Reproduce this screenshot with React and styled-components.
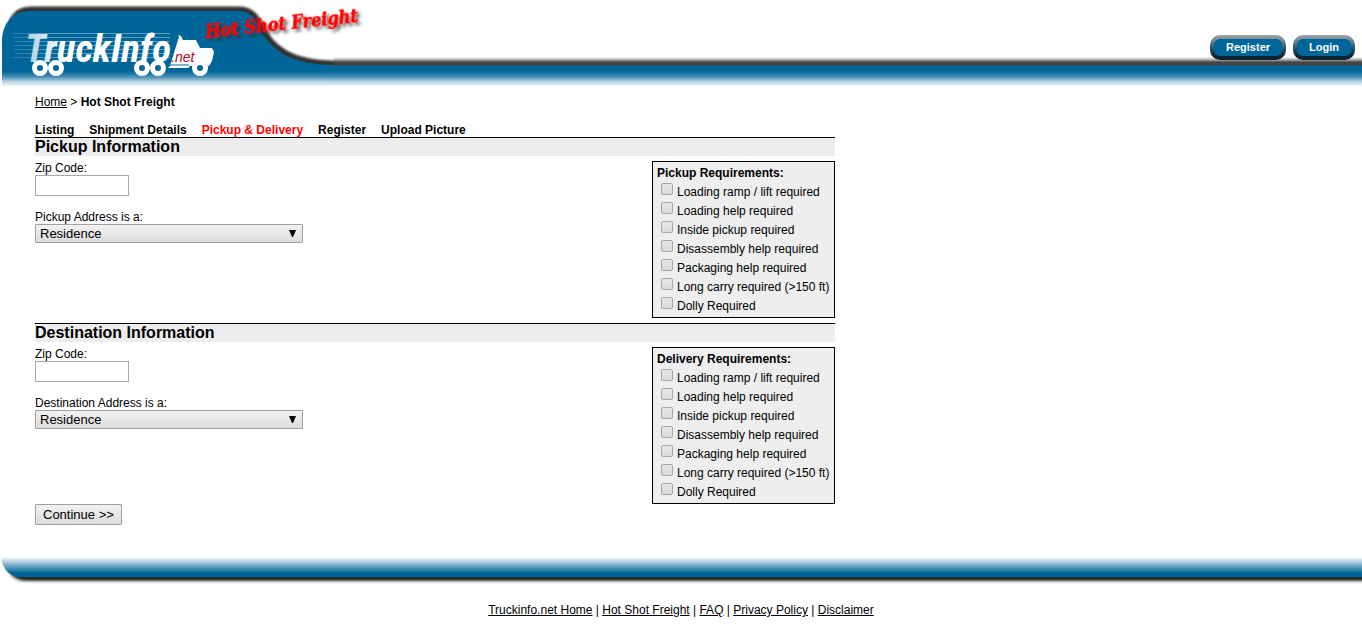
import React from "react";
import styled, { createGlobalStyle } from "styled-components";

const Global = createGlobalStyle`
  body {
    margin: 0;
    background: #fff;
    color: #000;
    font: 12px/14px "Liberation Sans", Arial, sans-serif;
  }
  *, *::before, *::after { box-sizing: border-box; }
`;

const Page = styled.div`
  display: flex;
  flex-direction: column;
`;

const Header = styled.header`
  display: flex;
  justify-content: space-between;
  height: 88px;
  background: linear-gradient(
    to bottom,
    #fff 57px,
    #c4c4c4 59px,
    #777 61px,
    #444 62px,
    #444 65px,
    #069 66px,
    #069 71px,
    #4a91b6 77px,
    #bdd7e4 82px,
    #fff 87px
  );
`;

const Brand = styled.a`
  display: block;
  height: 88px;
`;

const Account = styled.nav`
  display: flex;
  gap: 7px;
  padding: 35px 7px 0 0;
`;

const PillButton = styled.button`
  height: 25px;
  padding: 0 12px;
  border: 4px solid transparent;
  border-radius: 10px;
  background:
    linear-gradient(#069, #069) padding-box,
    linear-gradient(to bottom, #a2a6a7, #6c8a97 20%, #24506a 55%, #0b2430 85%) border-box;
  color: #fff;
  font: bold 11px/15px "Liberation Sans", Arial, sans-serif;
`;

const Main = styled.main`
  display: flex;
  flex-direction: column;
  align-items: flex-start;
  width: 100%;
  max-width: 870px;
  padding: 7px 35px 32px;
`;

const Crumbs = styled.nav`
  margin-bottom: 14px;
`;

const TextLink = styled.a`
  color: #000;
  text-decoration: underline;
`;

const Steps = styled.nav`
  display: flex;
  flex-wrap: wrap;
  gap: 0 15px;
`;

const Step = styled.a`
  color: ${(p) => (p.$active ? "#f00" : "#000")};
  font-weight: bold;
  text-decoration: none;
`;

const Section = styled.section`
  width: 100%;
  border-top: 1px solid #000;
`;

const SectionTitle = styled.h2`
  margin: 0 0 5px;
  background: #ededed;
  font-size: 16px;
  line-height: 18px;
`;

const SectionBody = styled.div`
  display: flex;
  justify-content: space-between;
  align-items: flex-start;
  padding-bottom: ${(p) => (p.$last ? 0 : 5)}px;
`;

const Fields = styled.div`
  display: flex;
  flex-direction: column;
  gap: 14px;
`;

const Field = styled.div`
  display: flex;
  flex-direction: column;
  align-items: flex-start;
`;

const ZipInput = styled.input`
  width: 94px;
  height: 21px;
  padding: 0 4px;
  border: 1px solid #a9a9a9;
  font: 13px "Liberation Sans", Arial, sans-serif;
`;

const SelectBox = styled.div`
  display: grid;
  align-items: center;
  width: 268px;
  > * { grid-area: 1 / 1; }
`;

const Select = styled.select`
  appearance: none;
  width: 100%;
  height: 19px;
  padding: 0 24px 0 4px;
  border: 1px solid #a0a0a0;
  border-radius: 1px;
  background: linear-gradient(#f2f2f2, #dcdcdc);
  color: #000;
  font: 13px/16px "Liberation Sans", Arial, sans-serif;
`;

const Arrow = styled.svg`
  justify-self: end;
  margin-right: 7px;
  pointer-events: none;
`;

const Requirements = styled.fieldset`
  display: flex;
  flex-direction: column;
  min-width: 183px;
  margin: 0;
  padding: 4px;
  border: 1px solid #000;
  background: #eee;
`;

const RequirementsTitle = styled.legend`
  float: left;
  padding: 0;
  font-weight: bold;
  line-height: 14px;
`;

const Requirement = styled.label`
  display: flex;
  gap: 4px;
  height: 19px;
  padding: 3px 0 0 4px;
  line-height: 18px;
  white-space: nowrap;
`;

const Checkbox = styled.input`
  appearance: none;
  flex: none;
  width: 12px;
  height: 12px;
  margin: 0;
  border: 1px solid #a6a6a6;
  border-radius: 2px;
  background: linear-gradient(#e6e6e6, #dadada);
  &:checked { background: #555; }
`;

const ContinueButton = styled.button`
  height: 21px;
  padding: 0 7px;
  border: 1px solid #a0a0a0;
  border-radius: 1px;
  background: linear-gradient(#f2f2f2, #dcdcdc);
  color: #000;
  font: 13px/18px "Liberation Sans", Arial, sans-serif;
`;

const FooterBand = styled.svg`
  display: block;
  width: 100%;
  height: 32px;
`;

const FooterLinks = styled.footer`
  padding: 14px 8px;
  text-align: center;
`;

const WHEELS = [40, 56, 142, 158, 200];
const STREAKS = [
  [11, 33], [13, 37], [15, 41], [12, 45], [14, 49], [16, 53], [11, 57],
];

function Logo() {
  return (
    <svg width="420" height="88" viewBox="0 0 420 88" role="img" aria-label="TruckInfo.net Hot Shot Freight">
      <defs>
        <filter id="edgeBlur" x="-10%" y="-20%" width="120%" height="140%">
          <feGaussianBlur stdDeviation="1.2" />
        </filter>
        <filter id="textShadow" x="-10%" y="-40%" width="120%" height="200%">
          <feDropShadow dx="3" dy="3" stdDeviation="1.5" floodColor="#222" floodOpacity="0.65" />
        </filter>
        <clipPath id="tab">
          <rect width="334" height="88" />
        </clipPath>
        <linearGradient id="body" x1="0" x2="0" y1="0" y2="88" gradientUnits="userSpaceOnUse">
          <stop offset="0.81" stopColor="#069" />
          <stop offset="0.875" stopColor="#4a91b6" />
          <stop offset="0.93" stopColor="#bdd7e4" />
          <stop offset="0.99" stopColor="#fff" />
        </linearGradient>
        <linearGradient id="letters" x1="24" x2="64" y1="0" y2="0" gradientUnits="userSpaceOnUse">
          <stop offset="0" stopColor="#a9cbdd" />
          <stop offset="1" stopColor="#fff" />
        </linearGradient>
        <linearGradient id="streak" x1="10" x2="50" y1="0" y2="0" gradientUnits="userSpaceOnUse">
          <stop offset="0" stopColor="#8fbbd2" stopOpacity="0.2" />
          <stop offset="1" stopColor="#9cc3d8" stopOpacity="0.6" />
        </linearGradient>
      </defs>
      <g clipPath="url(#tab)">
        <rect width="334" height="88" fill="#fff" />
        <path
          d="M12 22 C17 13 22 10 32 10 H239 C251 10 256 17 261 28 C271 47 289 64 334 64 H400"
          fill="none"
          stroke="#333"
          strokeWidth="7"
          filter="url(#edgeBlur)"
        />
        <path
          d="M2 42 C2 24 12 11 30 11 H238 C250 11 255 18 260 29 C270 48 288 65 334 65 V88 H2 Z"
          fill="url(#body)"
        />
      </g>
      <g fill="url(#streak)">
        {STREAKS.map(([x, y]) => (
          <rect key={y} x={x} y={y} width={170 - x} height="1" />
        ))}
      </g>
      <path
        d="M170 66 L178 40 L179 37 L178 35 L181 36 L183 40 H196 L200 48 H212 L214 52 L212 61 L209 66 H190 L188 68 H168 Z"
        fill="#fff"
      />
      <text
        x="25"
        y="62"
        fill="url(#letters)"
        fontFamily="'Roboto Condensed', Lato, 'Liberation Sans', sans-serif"
        fontSize="39"
        fontWeight="bold"
        fontStyle="italic"
      >
        TruckInfo
      </text>
      <text
        x="171"
        y="62"
        fill="#b00a18"
        fontFamily="'Liberation Sans', Arial, sans-serif"
        fontSize="14"
        fontStyle="italic"
      >
        .net
      </text>
      <path d="M170 65 H189" stroke="#069" />
      {WHEELS.map((x) => (
        <circle key={x} cx={x} cy="68" r="5.5" fill="#069" stroke="#fff" strokeWidth="5" />
      ))}
      <text
        x="206"
        y="38"
        transform="rotate(-6 206 38)"
        fill="#f00"
        stroke="#f00"
        strokeWidth="0.5"
        fontFamily="'DejaVu Serif Condensed', 'DejaVu Serif', serif"
        fontSize="18"
        fontWeight="bold"
        fontStyle="italic"
        filter="url(#textShadow)"
      >
        Hot Shot Freight
      </text>
    </svg>
  );
}

const EXTRAS = [
  "Loading ramp / lift required",
  "Loading help required",
  "Inside pickup required",
  "Disassembly help required",
  "Packaging help required",
  "Long carry required (>150 ft)",
  "Dolly Required",
];

function AddressSection({ id, title, addressLabel, requirementsTitle, last }) {
  return (
    <Section>
      <SectionTitle>{title}</SectionTitle>
      <SectionBody $last={last}>
        <Fields>
          <Field>
            <label htmlFor={`${id}-zip`}>Zip Code:</label>
            <ZipInput id={`${id}-zip`} type="text" />
          </Field>
          <Field>
            <label htmlFor={`${id}-kind`}>{addressLabel}</label>
            <SelectBox>
              <Select id={`${id}-kind`} defaultValue="Residence">
                <option>Residence</option>
              </Select>
              <Arrow width="7" height="7" viewBox="0 0 7 7" aria-hidden="true">
                <path d="M0 0H7L4 7H3Z" />
              </Arrow>
            </SelectBox>
          </Field>
        </Fields>
        <Requirements>
          <RequirementsTitle>{requirementsTitle}</RequirementsTitle>
          {EXTRAS.map((text) => (
            <Requirement key={text}>
              <Checkbox type="checkbox" />
              {text}
            </Requirement>
          ))}
        </Requirements>
      </SectionBody>
    </Section>
  );
}

const STEPS = ["Listing", "Shipment Details", "Pickup & Delivery", "Register", "Upload Picture"];
const LINKS = ["Truckinfo.net Home", "Hot Shot Freight", "FAQ", "Privacy Policy", "Disclaimer"];

export default function App() {
  return (
    <Page>
      <Global />
      <Header>
        <Brand href="#">
          <Logo />
        </Brand>
        <Account>
          <PillButton type="button">Register</PillButton>
          <PillButton type="button">Login</PillButton>
        </Account>
      </Header>
      <Main>
        <Crumbs>
          <TextLink href="#">Home</TextLink> &gt; <b>Hot Shot Freight</b>
        </Crumbs>
        <Steps>
          {STEPS.map((step) => (
            <Step key={step} href="#" $active={step === "Pickup & Delivery"}>
              {step}
            </Step>
          ))}
        </Steps>
        <AddressSection
          id="pickup"
          title="Pickup Information"
          addressLabel="Pickup Address is a:"
          requirementsTitle="Pickup Requirements:"
        />
        <AddressSection
          id="delivery"
          title="Destination Information"
          addressLabel="Destination Address is a:"
          requirementsTitle="Delivery Requirements:"
          last
        />
        <ContinueButton type="button">Continue &gt;&gt;</ContinueButton>
      </Main>
      <FooterBand aria-hidden="true">
        <defs>
          <linearGradient id="band" x1="0" x2="0" y1="0" y2="1">
            <stop offset="0" stopColor="#fff" />
            <stop offset="0.3" stopColor="#9cc3d6" />
            <stop offset="0.7" stopColor="#1f77a4" />
            <stop offset="0.8" stopColor="#069" />
            <stop offset="1" stopColor="#069" />
          </linearGradient>
          <filter id="bandBlur" x="-5%" y="-20%" width="110%" height="160%">
            <feGaussianBlur stdDeviation="1.5" />
          </filter>
        </defs>
        <path d="M8 12 C12 21 18 24 28 24 H4000 V10 H8 Z" fill="#222" filter="url(#bandBlur)" />
        <path d="M1 0 C2 12 10 20 20 20 H4000 V0 Z" fill="url(#band)" />
      </FooterBand>
      <FooterLinks>
        {LINKS.map((text, i) => (
          <React.Fragment key={text}>
            {i > 0 && " | "}
            <TextLink href="#">{text}</TextLink>
          </React.Fragment>
        ))}
      </FooterLinks>
    </Page>
  );
}
